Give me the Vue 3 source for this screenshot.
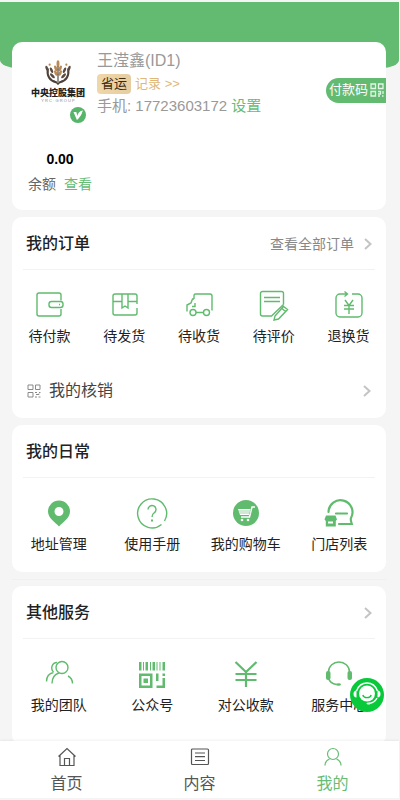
<template>
  <div class="page">
    <main class="content">
      <div class="banner"></div>

      <!-- User card -->
      <section class="card user-card">
        <div class="user-top">
          <div class="avatar">
            <svg class="avatar-wheat" viewBox="0 0 30 28" width="28" height="26" aria-hidden="true">
              <g fill="none" stroke="#4d4038" stroke-width="2.2" stroke-linecap="round">
                <path d="M13 24C6 22 3 17 4 10" />
                <path d="M17 24c7-2 10-7 9-14" />
              </g>
              <g fill="#5a4a40">
                <ellipse cx="3" cy="9" rx="1.4" ry="3" transform="rotate(-20 3 9)" />
                <ellipse cx="27" cy="9" rx="1.4" ry="3" transform="rotate(20 27 9)" />
                <ellipse cx="8" cy="11" rx="1.4" ry="3.2" transform="rotate(-25 8 11)" />
                <ellipse cx="22" cy="11" rx="1.4" ry="3.2" transform="rotate(25 22 11)" />
                <ellipse cx="9" cy="17" rx="1.4" ry="3.4" transform="rotate(-42 9 17)" />
                <ellipse cx="21" cy="17" rx="1.4" ry="3.4" transform="rotate(42 21 17)" />
              </g>
              <g fill="#b98a55">
                <ellipse cx="15" cy="4" rx="1.6" ry="3.6" />
                <ellipse cx="12.6" cy="9" rx="1.5" ry="3.2" transform="rotate(-22 12.6 9)" />
                <ellipse cx="17.4" cy="9" rx="1.5" ry="3.2" transform="rotate(22 17.4 9)" />
                <ellipse cx="12.6" cy="14" rx="1.5" ry="3.2" transform="rotate(-22 12.6 14)" />
                <ellipse cx="17.4" cy="14" rx="1.5" ry="3.2" transform="rotate(22 17.4 14)" />
                <circle cx="6" cy="5" r="1.2" />
                <circle cx="24" cy="5" r="1.2" />
              </g>
              <path d="M15 7v20M15 26l-5-4M15 26l5-4" stroke="#4d4038" stroke-width="1.2" fill="none" />
            </svg>
            <div class="avatar-name">中央控股集团</div>
            <div class="avatar-sub">Y R C · G R O U P</div>
            <svg class="avatar-badge" viewBox="0 0 16 16" width="16" height="16" aria-hidden="true">
              <circle cx="8" cy="8" r="8" fill="#57b56a" />
              <path d="M3.500 5h2.800l1.200 4C8 6.200 9.500 4 13.300 3.600c-1.300 1-.9 1.700-1.500 3C10.600 9.200 9 11.500 6.900 13z" fill="#fff" />
            </svg>
          </div>
          <div class="user-info">
            <div class="user-name">王滢鑫(ID1)</div>
            <div class="user-level">
              <span class="level-tag">省运</span>
              <a class="level-link" href="#">记录 &gt;&gt;</a>
            </div>
            <div class="user-phone">手机: 17723603172 <a href="#">设置</a></div>
          </div>
          <button class="pay-code">
            付款码
            <svg viewBox="0 0 14 14" width="14" height="14" aria-hidden="true">
              <path d="M1 1h4.500v4.500H1zM8.500 1H13v4.500H8.500zM1 8.500h4.500V13H1zM8 8.500h2.500v2.500H8M13 8v3M8 13h2M12 13h1.500" fill="none" stroke="#e4f6e7" stroke-width="1.3" />
            </svg>
          </button>
        </div>
        <div class="balance">
          <strong class="balance-num">0.00</strong>
          <div class="balance-text">余额 <a href="#">查看</a></div>
        </div>
      </section>

      <!-- Orders -->
      <section class="card order-card">
        <div class="card-header">
          <h2 class="card-title">我的订单</h2>
          <a class="card-more" href="#">
            查看全部订单
            <svg class="arrow" viewBox="0 0 8 12" width="8" height="12" aria-hidden="true"><path d="M1 1l5.500 5L1 11" /></svg>
          </a>
        </div>
        <div class="grid grid-5">
          <a v-for="item in orders" :key="item.text" class="grid-item" href="#">
            <svg class="icon" viewBox="0 0 32 32" width="32" height="32" aria-hidden="true" v-html="item.icon"></svg>
            <span>{{ item.text }}</span>
          </a>
        </div>
        <a class="verify" href="#">
          <svg viewBox="0 0 14 14" width="14" height="14" aria-hidden="true">
            <path d="M1 1h5v4.500H1zM8.500 1h4.500v4.500H8.500zM1 8.500h5V13H1zM8 8.500h2M12 8.500h1.500M9 10.500h3M8 13h2M11.500 13h2M12 10.500v-1" fill="none" stroke="#8a8a8a" />
          </svg>
          <span class="verify-text">我的核销</span>
          <svg class="arrow" viewBox="0 0 8 12" width="8" height="12" aria-hidden="true"><path d="M1 1l5.500 5L1 11" /></svg>
        </a>
      </section>

      <!-- Daily -->
      <section class="card daily-card">
        <div class="card-header">
          <h2 class="card-title">我的日常</h2>
        </div>
        <div class="grid grid-4">
          <a v-for="item in daily" :key="item.text" class="grid-item" href="#">
            <svg class="icon" viewBox="0 0 32 32" width="32" height="32" aria-hidden="true" v-html="item.icon"></svg>
            <span>{{ item.text }}</span>
          </a>
        </div>
      </section>

      <div class="divider"></div>

      <!-- Services -->
      <section class="card service-card">
        <div class="card-header">
          <h2 class="card-title">其他服务</h2>
          <a class="card-more" href="#" aria-label="其他服务">
            <svg class="arrow" viewBox="0 0 8 12" width="8" height="12" aria-hidden="true"><path d="M1 1l5.500 5L1 11" /></svg>
          </a>
        </div>
        <div class="grid grid-4">
          <a v-for="item in services" :key="item.text" class="grid-item" href="#">
            <svg class="icon" viewBox="0 0 32 32" width="32" height="32" aria-hidden="true" v-html="item.icon"></svg>
            <span>{{ item.text }}</span>
          </a>
        </div>
      </section>
    </main>

    <button class="kefu" aria-label="客服">
      <svg viewBox="0 0 34 34" width="34" height="34" aria-hidden="true">
        <circle cx="17" cy="17" r="17" fill="#08c93a" />
        <circle cx="17" cy="15.500" r="8" fill="#fff" />
        <path d="M6.500 13C8.500 7.500 12.500 5 17 5s8.500 2.500 10.500 8M27 20c-1.500 3-4 5-8 5.500" fill="none" stroke="#fff" stroke-width="1.500" />
        <path d="M6.500 12.500v7C4.500 19.500 3.500 18 3.500 16s1-3.500 3-3.500zM27.500 12.500v7c2 0 3-1.500 3-3.500s-1-3.500-3-3.500z" fill="#fff" />
        <path d="M12.800 17c1.200 3.600 7.200 3.600 8.400 0" fill="none" stroke="#08c93a" stroke-width="1.300" />
        <ellipse cx="18.500" cy="25.500" rx="2" ry="1" fill="#fff" />
      </svg>
    </button>

    <nav class="tabbar">
      <a v-for="tab in tabs" :key="tab.text" class="tab" :class="{ active: tab.text === activeTab }" href="#" @click.prevent="activeTab = tab.text">
        <svg class="tab-icon" viewBox="0 0 20 20" width="20" height="20" aria-hidden="true" v-html="tab.icon"></svg>
        <span>{{ tab.text }}</span>
      </a>
    </nav>
  </div>
</template>

<script setup>
import { ref } from 'vue'

const activeTab = ref('我的')

const orders = [
  { text: '待付款', icon: '<path d="M28 11.500V6a2 2 0 0 0-2-2H6a2 2 0 0 0-2 2v19a2 2 0 0 0 2 2h20a2 2 0 0 0 2-2v-5"/><rect x="16" y="12.500" width="14" height="6" rx="2.500"/><path d="M26 15.500h1"/>' },
  { text: '待发货', icon: '<path d="M29 15V7a2 2 0 0 0-2-2H7a2 2 0 0 0-2 2v17a2 2 0 0 0 2 2h20a2 2 0 0 0 2-2v-5M5 12.500h9M20 12.500h9M14 5v14l3-2 3 2V5"/>' },
  { text: '待收货', icon: '<path d="M11 10V6.500A1.500 1.500 0 0 1 12.500 5H27a2 2 0 0 1 2 2v14.500M11 10H9.500l-1.500 4-4 2v6.500M12 14v3.500H9M13 23.500h7.500"/><circle cx="10" cy="23.500" r="3"/><circle cx="23.500" cy="23.500" r="3"/>' },
  { text: '待评价', icon: '<path d="M25.500 15.500V4.500a2 2 0 0 0-2-2h-19a2 2 0 0 0-2 2V25a2 2 0 0 0 2 2h9l12-11.500M6 8.500h16M6 12.500h16M17 27l8.500-9.500 4 3L20.500 30 16 31zM24 19.500l3.500 3"/>' },
  { text: '退换货', icon: '<path d="M11 5H7a4 4 0 0 0-4 4v15a4 4 0 0 0 4 4h18a4 4 0 0 0 4-4V9a4 4 0 0 0-4-4h-6M9 5h5.500M11.500 2.500L14.500 5l-3 2.500M12 11l4 5.500 4-5.500M11 16.500h10M11 20h10M16 16.500V25"/>' }
]

const daily = [
  { text: '地址管理', icon: '<path d="M16 3.500a11 11 0 0 0-11 11C5 21 12 25 16 29.500 20 25 27 21 27 14.500a11 11 0 0 0-11-11zm0 6.500a4.500 4.500 0 1 1 0 9 4.500 4.500 0 0 1 0-9z" fill="currentColor" fill-rule="evenodd" stroke="none"/>' },
  { text: '使用手册', icon: '<path d="M25.500 27.500A14.500 14.500 0 1 1 28.500 24M12 12.500a4 4 0 1 1 6.200 3.300C16.500 17 16 17.500 16 20" stroke-width="1.400"/><path d="M16 22.500v2" stroke-width="2"/>' },
  { text: '我的购物车', icon: '<circle cx="16" cy="16" r="13" fill="currentColor" stroke="none"/><path d="M25 10h-3l-2.500 10H11" stroke="#fff" stroke-width="1.500"/><path d="M8 12h12.500L19 18h-9z" fill="#fff" stroke="none"/><path d="M8.500 14h12M9.500 16h11" stroke="#60bb6e" stroke-width=".6"/><circle cx="12" cy="23" r="1.300" fill="#fff" stroke="none"/><circle cx="18" cy="23" r="1.300" fill="#fff" stroke="none"/>' },
  { text: '门店列表', icon: '<path d="M5.500 15a12 12 0 1 1 22.500 6c-.6 1.200-.5 2 .8 6H16M13 16.500h11" stroke-width="2.200" stroke-linecap="round"/><path d="M3 18.500h9.500l1.500 4-1.200 1.500v5.500H2.800V24l-1.300-1.500z" fill="currentColor" stroke="none"/><path d="M5 24.500h5v2H5z" fill="#fff" stroke="none"/>' }
]

const services = [
  { text: '我的团队', icon: '<circle cx="19" cy="9.500" r="6"/><path d="M14 4.500A5.500 5.500 0 0 0 10.500 14M9 25.500c0-5 2-9 7-10.500M25 18c3 1.500 4.500 4 4.500 7.500M3.500 23.500c0-4.500 2.500-8 7-9"/>' },
  { text: '公众号', icon: '<g fill="currentColor" stroke="none"><path d="M3 4h2.500v8.500H3zM7 4h1v8.500H7zM9.500 4H12v8.500H9.500zM14 4h1v8.500h-1zM16.500 4H19v8.500h-2.500zM20.500 4h1v8.500h-1zM23.500 4h1v8.500h-1zM26.500 4H29v8.500h-2.500z"/><path d="M3 15.500h13.500V30H3zm2.500 2.500v9.500H14V18z" fill-rule="evenodd"/><path d="M7.500 20.500H12V25H7.500zM20 15.500h2.500v7.500H20zM26.500 15.500H29V18h-2.500zM26.500 20H29v10h-8.500v-2.500h6z"/></g>' },
  { text: '对公收款', icon: '<path d="M5.500 4L16 14 26.500 4M16 14v15M5.500 16h21M5.500 22h21" stroke-width="2.200"/>' },
  { text: '服务中心', icon: '<path d="M5.500 14c0-6 5-10 10.500-10s10.500 4 10.500 10M5.500 20c1 4 4 6 8 6.500" stroke-width="1.500"/><rect x="3" y="13" width="4.500" height="9" rx="2" fill="currentColor" stroke="none"/><rect x="24.500" y="13" width="4.500" height="9" rx="2" fill="currentColor" stroke="none"/><ellipse cx="15.500" cy="26.500" rx="2.500" ry="1.300" fill="currentColor" stroke="none"/>' }
]

const tabs = [
  { text: '首页', icon: '<path d="M1.500 9.500L10 1.500l8.500 8M3 8v10.500h14V8M7.500 18.500v-7h5v7"/>' },
  { text: '内容', icon: '<rect x="1.500" y="2" width="17" height="15.500" rx="1"/><path d="M5 6h10M5 9.700h10M5 13.500h10"/>' },
  { text: '我的', icon: '<circle cx="10" cy="7" r="5.500"/><path d="M2 18.500c0-3.500 2-5.500 4.500-6.500M18 18.500c0-3.500-2-5.500-4.500-6.500"/>' }
]
</script>

<style>
body { background: #f5f5f5; }
</style>

<style scoped>
.page {
  height: 100vh;
  box-sizing: border-box;
  padding: 2px 1px 2px 0;
  display: flex;
  flex-direction: column;
  position: relative;
  font-family: "Liberation Sans", "Noto Sans CJK SC", sans-serif;
  font-size: 14px;
  line-height: 20px;
  color: #222;
}
.page a { text-decoration: none; color: inherit; }
.content {
  flex: 1;
  min-height: 0;
  overflow-y: auto;
  scrollbar-width: none;
}
.banner {
  height: 66px;
  margin-bottom: -26px;
  background: #62bb70;
  border-radius: 0 0 18px 18px / 0 0 8px 8px;
}
.card {
  margin: 0 13px 7px 12px;
  background: #fff;
  border-radius: 10px;
  position: relative;
}

/* user */
.user-card { padding-bottom: 16px; }
.user-top { display: flex; align-items: flex-start; }
.avatar {
  width: 56px;
  margin: 18px 11px 0 18px;
  position: relative;
  display: flex;
  flex-direction: column;
  align-items: center;
}
.avatar-name { margin-top: 2px; font-size: 9px; line-height: 10px; font-weight: 900; white-space: nowrap; }
.avatar-sub { font-size: 4px; line-height: 6px; color: #888; white-space: nowrap; }
.avatar-badge { position: absolute; right: 0; top: 47px; }
.user-info { flex: 1; padding-top: 9px; color: #999; }
.user-name { font-size: 16px; line-height: 20px; }
.user-level { display: flex; align-items: center; gap: 4px; margin: 3px 0; font-size: 13px; }
.level-tag {
  padding: 0 4px;
  border-radius: 4px;
  background: linear-gradient(90deg, #eed7a8, #e6cda1);
  color: #3c2a10;
}
.page .level-link { color: #dfb778; }
.user-phone { font-size: 15px; line-height: 18px; white-space: nowrap; }
.page .user-phone a, .page .balance a { color: #67bc76; }
.pay-code {
  display: flex;
  align-items: center;
  gap: 2px;
  height: 25px;
  margin-top: 36px;
  padding: 0 2px 2px 3px;
  border: 0;
  border-radius: 13px 0 0 13px;
  background: #62bb70;
  color: #fff;
  font: inherit;
  font-size: 13px;
  white-space: nowrap;
}
.balance { width: 96px; margin-top: 34px; text-align: center; }
.balance-num { display: block; color: #000; line-height: 20px; }
.balance-text { margin-top: 5px; color: #666; }
.balance-text a { margin-left: 4px; }

/* shared cards */
.card-header {
  display: flex;
  justify-content: space-between;
  align-items: center;
  height: 50px;
  margin: 0 11px;
  padding: 2px 3px 0;
  border-bottom: 1px solid #f2f2f2;
}
.card-title { margin: 0; font-size: 16px; font-weight: 500; color: #222; }
.page .card-more { display: flex; align-items: center; gap: 10px; color: #888; }
.arrow { fill: none; stroke: #c4c4c4; stroke-width: 2; }
.grid { display: grid; }
.grid-5 { grid-template-columns: repeat(5, 1fr); }
.grid-4 { grid-template-columns: repeat(4, 1fr); }
.grid-item {
  display: flex;
  flex-direction: column;
  align-items: center;
  padding-top: 19px;
  gap: 5px;
  white-space: nowrap;
}
.icon { color: #60bb6e; fill: none; stroke: currentColor; stroke-width: 1.4; }
.order-card { padding-bottom: 12px; }
.verify { display: flex; align-items: center; height: 30px; margin-top: 30px; padding: 0 15px; }
.verify-text { flex: 1; margin-left: 8px; font-size: 16px; color: #444; }
.daily-card { padding-bottom: 18px; }
.divider { height: 1px; margin: 0 13px 6px 12px; background: #f0f0f0; }
.service-card { padding-bottom: 30px; }

/* customer service */
.kefu {
  position: absolute;
  right: 16px;
  bottom: 88px;
  width: 34px;
  height: 34px;
  padding: 0;
  border: 0;
  border-radius: 50%;
  background: none;
}
.kefu svg { display: block; }

/* tab bar */
.tabbar {
  display: flex;
  height: 57px;
  background: #fff;
  box-shadow: 0 -1px 2px rgba(0, 0, 0, 0.06);
  position: relative;
}
.tab {
  flex: 1;
  display: flex;
  flex-direction: column;
  align-items: center;
  padding-top: 6px;
  gap: 7px;
  font-size: 16px;
}
.page .tab { color: #555; }
.page .tab.active { color: #67bc76; }
.tab-icon { fill: none; stroke: currentColor; stroke-width: 1.2; }
</style>
